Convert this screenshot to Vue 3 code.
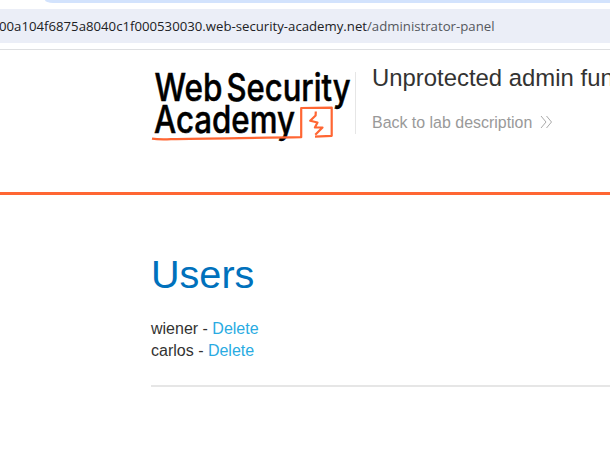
<script setup>
const users = ['wiener', 'carlos']
</script>

<template>
  <div class="page">
    <div class="browser">
      <div class="tabs"></div>
      <div class="address">
        <svg class="url" width="610" height="34">
          <text x="-1" y="22" class="host" textLength="368" lengthAdjust="spacingAndGlyphs">00a104f6875a8040c1f000530030.web-security-academy.net</text>
          <text x="367" y="22" class="path" textLength="127.5" lengthAdjust="spacingAndGlyphs">/administrator-panel</text>
        </svg>
      </div>
    </div>
    <header>
      <svg class="logo" width="204" height="80" viewBox="151 65 204 80">
        <g class="wordmark">
          <text x="154.5" y="100.700" textLength="68" lengthAdjust="spacingAndGlyphs">Web</text>
          <text x="226.500" y="100.700" textLength="124" lengthAdjust="spacingAndGlyphs">Security</text>
          <text x="154" y="133" textLength="141" lengthAdjust="spacingAndGlyphs">Academy</text>
        </g>
        <path class="under" d="M152 138.600 C158 139.700 164 139.500 171 139.200 C205 138.200 254 138.100 301.200 137.200 L301.200 108 L331.700 107.600 L331.700 135.800 L315 136.600" />
        <path class="bolt" d="M315.800 111.500 L315.600 115.500 L310.200 120.700 L317.500 122.500 L314.900 127.500 L322.500 127.500 L315.300 134.700" />
      </svg>
      <div class="lab">
        <h2>Unprotected admin functionality</h2>
        <a class="back">Back to lab description
          <svg width="13" height="14" viewBox="0 0 13 14"><path d="M1 1L6 7L1 13M6.500 1L11.500 7L6.500 13" /></svg>
        </a>
      </div>
    </header>
    <main>
      <h1>Users</h1>
      <div v-for="user in users" :key="user" class="user">{{ user }} - <a>Delete</a></div>
      <hr />
    </main>
  </div>
</template>

<style>
body { margin: 0; background: #fff; }
</style>
<style scoped>
.page { width: 610px; height: 476px; overflow: hidden; font-family: "Liberation Sans", Arial, sans-serif; color: #333332; }
.browser { height: 49px; border-bottom: 1px solid #dedfe1; }
.tabs { height: 3px; margin-left: 45px; background: #d3e3fd; border-bottom-left-radius: 8px 3px; }
.address { height: 34px; margin-top: 6px; background: #ebeef7; }
.url { display: block; font: 13.5px "Open Sans", sans-serif; }
.host { fill: #202124; }
.path { fill: #55585d; }
header { display: flex; height: 142px; border-bottom: 3px solid #ff6633; padding-left: 151px; }
.logo { flex: none; margin-top: 15px; }
.wordmark { font: 500 37.5px Inter, sans-serif; fill: #000; stroke: #000; stroke-width: .5; }
.under { fill: none; stroke: #ff6633; stroke-width: 2.2; stroke-linejoin: round; }
.bolt { fill: none; stroke: #ff6633; stroke-width: 2.2; stroke-linejoin: round; }
.lab { height: 62px; margin-top: 22px; border-left: 1px solid #e6e6e6; padding-left: 16px; white-space: nowrap; }
h2 { margin: -8px 0 0; font-weight: 400; font-size: 23.9px; line-height: 28px; }
.back { display: flex; align-items: center; gap: 8px; margin-top: 21px; font-size: 15.95px; line-height: 20px; color: #999; }
.back svg { fill: none; stroke: #aaa; stroke-width: 1; position: relative; top: -1px; }
main { padding: 54px 0 0 151px; }
h1 { margin: 0 0 19px; font-size: 39.6px; line-height: 50px; font-weight: 400; color: #0071bc; }
.user { font-size: 16px; line-height: 22px; white-space: pre; }
.user a { color: #29abe2; }
hr { margin: 23px 0 0; border: 0; height: 2px; background: #e6e6e6; }
</style>
